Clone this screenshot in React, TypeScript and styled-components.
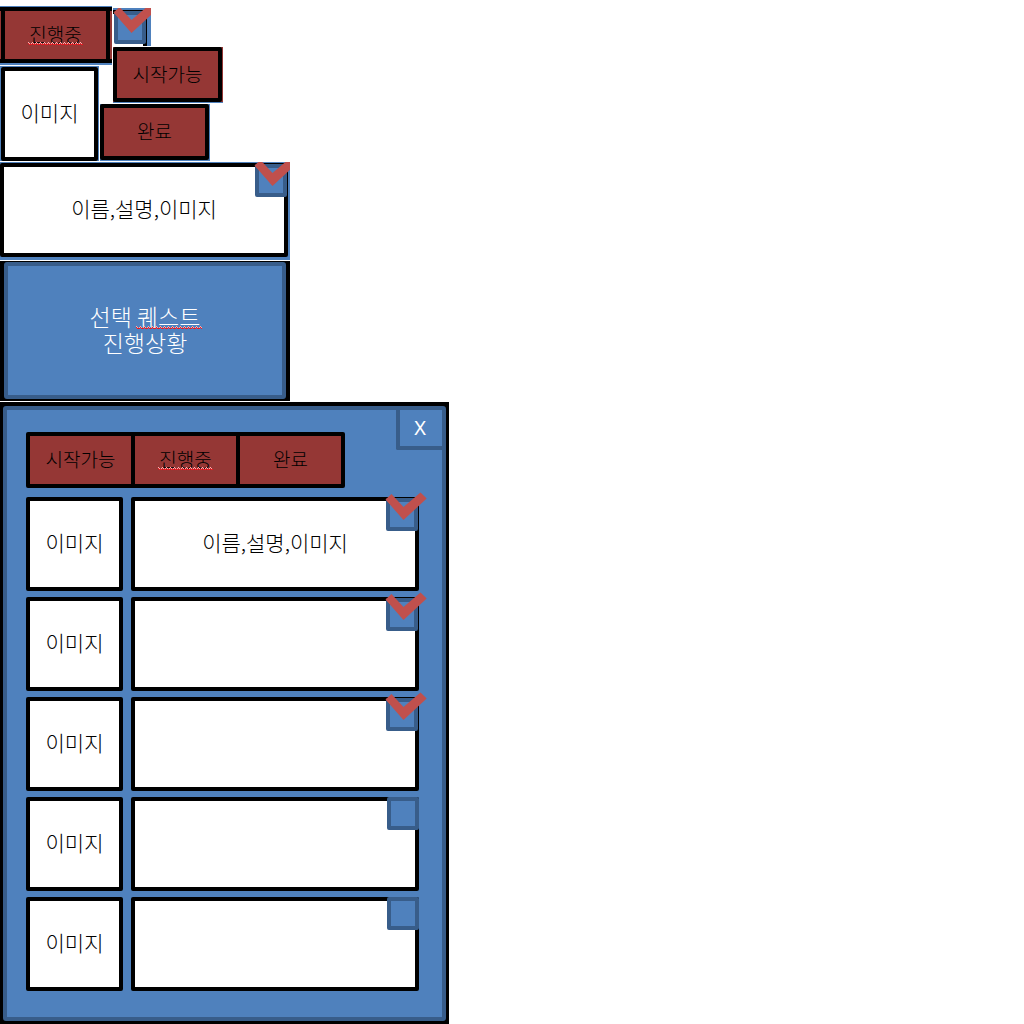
import React, { useState } from "react";
import styled, { createGlobalStyle, css } from "styled-components";

const color = {
  blue: "#4f81bd",
  navy: "#385d8a",
  red: "#953735",
  mark: "#c0504d",
  black: "#000",
  white: "#fff",
};

const GlobalStyle = createGlobalStyle`
  *, *::before, *::after { box-sizing: border-box; }
  body {
    margin: 0;
    background: ${color.white};
    color: ${color.black};
    font-family: "Noto Sans CJK KR", "Noto Sans", sans-serif;
    font-weight: 300;
  }
  button { font: inherit; color: inherit; cursor: pointer; }
`;

const Page = styled.main`
  display: flex;
  flex-direction: column;
  align-items: flex-start;
  gap: 1px;
  padding-top: 6px;
`;

/* ---------- shared parts ---------- */

const center = css`
  display: flex;
  align-items: center;
  justify-content: center;
`;

const buttonText = css`
  font-size: 19px;
  line-height: 22px;
`;

const bodyText = css`
  padding-bottom: 4px;
  font-size: 21px;
  line-height: 26px;
`;

const Misspelled = styled.span`
  position: relative;
  display: inline-block;
`;

const WaveSvg = styled.svg`
  position: absolute;
  left: -1px;
  bottom: 0;
  width: calc(100% + 3px);
  height: 3px;
`;

function Spelling({ id, children }: { id: string; children: string }) {
  return (
    <Misspelled>
      {children}
      <WaveSvg aria-hidden="true" shapeRendering="crispEdges">
        <defs>
          <pattern id={id} width="4" height="3" patternUnits="userSpaceOnUse">
            <path d="M0 0h1v2h-1zM1 1h1v2h-1zM2 2h1v1h-1zM3 1h1v2h-1z" fill="#f01820" />
            <path d="M0 0h1v1h-1zM1 1h1v1h-1zM3 1h1v1h-1z" fill="#f3b4b4" />
          </pattern>
        </defs>
        <rect width="100%" height="3" fill={`url(#${id})`} />
      </WaveSvg>
    </Misspelled>
  );
}

const CheckHolder = styled.label<{ $flush?: boolean }>`
  position: absolute;
  top: ${(p) => (p.$flush ? "-4px" : "-3px")};
  right: ${(p) => (p.$flush ? "-4px" : "-3px")};
  width: 32px;
  height: 33px;
`;

const CheckInput = styled.input`
  appearance: none;
  display: block;
  width: 100%;
  height: 100%;
  margin: 0;
  border: 4px solid ${color.navy};
  border-radius: 2px;
  background: ${color.blue};
`;

const CheckMark = styled.svg`
  position: absolute;
  top: -6px;
  left: -1px;
  width: 42px;
  height: 28px;
  pointer-events: none;
`;

function Check({ initial, label }: { initial: boolean; label: string }) {
  const [checked, setChecked] = useState(initial);
  return (
    <CheckHolder $flush={!initial}>
      <CheckInput
        type="checkbox"
        aria-label={label}
        checked={checked}
        onChange={(e) => setChecked(e.target.checked)}
      />
      {checked && (
        <CheckMark viewBox="0 0 42 28" aria-hidden="true">
          <path d="M0.5 7.5 6.5 2 18.5 15 35.5 0.5 41.7 6.5 18.5 28z" fill={color.mark} />
        </CheckMark>
      )}
    </CheckHolder>
  );
}

const Thumb = styled.div`
  ${center}
  ${bodyText}
  width: 97px;
  height: 94px;
  flex: none;
  border: 4px solid ${color.black};
  border-radius: 2px;
  background: ${color.white};
`;

const InfoBox = styled.div`
  ${center}
  ${bodyText}
  position: relative;
  flex: 1;
  height: 94px;
  border: 4px solid ${color.black};
  border-radius: 2px;
  background: ${color.white};
`;

/* ---------- loose pieces ---------- */

const Pieces = styled.section`
  display: grid;
  grid-template-columns: 100px 13px 110px;
  grid-template-rows: 41px 19px 38px 57px;
`;

const ActivePiece = styled.button`
  grid-area: 1 / 1 / 3 / 3;
  display: flex;
  margin: 0 1px 1px 0;
  padding: 1px 0 2px;
  border: 0;
  background: ${color.blue};
`;

const ActiveEdge = styled.span`
  display: flex;
  flex: 1;
  align-self: stretch;
  padding: 0 2px 0 1px;
  border: solid ${color.black};
  border-width: 4px 0;
  background: ${color.red};
`;

const ActiveFace = styled.span`
  ${center}
  ${buttonText}
  flex: 1;
  padding-bottom: 2px;
  border: solid ${color.black};
  border-width: 0 4px;
`;

const CheckPiece = styled.div`
  grid-area: 1 / 3 / 2 / 4;
  align-self: end;
  width: 38px;
  height: 38px;
  margin-bottom: 1px;
  padding: 2px 4px 0 0;
  overflow: hidden;
  background: ${color.blue};
`;

const CheckCorner = styled.div`
  position: relative;
  height: 36px;
  border: solid ${color.black};
  border-width: 4px 4px 0 0;
  background: ${color.white};
`;

const StartPiece = styled.button`
  grid-area: 2 / 3 / 4 / 4;
  display: flex;
  margin: 0 0 1px;
  padding: 0 1px 1px 0;
  border: 0;
  background: linear-gradient(${color.red}, ${color.red}) top / 100% 55px no-repeat ${color.blue};
`;

const DonePiece = styled.button`
  grid-area: 4 / 2 / 5 / 4;
  display: flex;
  width: 110px;
  padding: 0 1px 1px 0;
  border: 0;
  background: ${color.blue};
`;

const PieceFace = styled.span`
  ${center}
  ${buttonText}
  flex: 1;
  align-self: stretch;
  padding-bottom: 2px;
  border: 4px solid ${color.black};
  border-radius: 2px;
  background: ${color.red};
`;

const ThumbPiece = styled.div`
  grid-area: 3 / 1 / 5 / 2;
  width: 99px;
  padding: 1px;
  overflow: hidden;
  background: ${color.blue};
`;

const CardPiece = styled.section`
  display: flex;
  width: 100%;
  max-width: 290px;
  padding: 1px 2px 3px 0;
  overflow: hidden;
  background: ${color.blue};
`;

const StatusOuter = styled.section`
  width: 100%;
  max-width: 290px;
  padding: 1px 4px 2px;
  background: ${color.black};
`;

const StatusFace = styled.p`
  ${center}
  flex-direction: column;
  height: 137px;
  margin: 0;
  padding-bottom: 4px;
  border: 4px solid ${color.navy};
  border-radius: 3px;
  background: ${color.blue};
  color: ${color.white};
  font-size: 23px;
  line-height: 26px;
`;

/* ---------- quest window ---------- */

const WindowOuter = styled.section`
  width: 100%;
  max-width: 449px;
  padding: 4px 3px 3px;
  background: ${color.black};
`;

const WindowFace = styled.div`
  padding-bottom: 26px;
  border: 4px solid ${color.navy};
  border-radius: 3px;
  background: ${color.blue};
`;

const WindowHead = styled.header`
  display: flex;
  align-items: flex-start;
  justify-content: space-between;
`;

const Tabs = styled.nav`
  display: flex;
  gap: 4px;
  margin: 22px 0 0 19px;
  padding: 4px;
  border-radius: 2px;
  background: ${color.black};
`;

const Tab = styled.button`
  && {
    ${buttonText}
  }
  width: 101px;
  height: 48px;
  padding: 0 0 2px;
  border: 0;
  background: ${color.red};
`;

const CloseButton = styled.button`
  width: 46px;
  height: 40px;
  padding: 0 2px 0 0;
  border: solid ${color.navy};
  border-width: 0 0 4px 4px;
  border-radius: 0 0 0 2px;
  background: ${color.blue};
  color: ${color.white};
  font-family: "Noto Sans", sans-serif;
  font-size: 20px;
  font-weight: 400;
  line-height: 24px;
`;

const QuestList = styled.ul`
  display: flex;
  flex-direction: column;
  gap: 6px;
  margin: 9px 23px 0 19px;
  padding: 0;
  list-style: none;
`;

const QuestRow = styled.li`
  display: flex;
  gap: 8px;
`;

const quests = [
  { info: "이름,설명,이미지", done: true },
  { info: "", done: true },
  { info: "", done: true },
  { info: "", done: false },
  { info: "", done: false },
];

export default function App() {
  return (
    <>
      <GlobalStyle />
      <Page>
        <Pieces>
          <ActivePiece type="button">
            <ActiveEdge>
              <ActiveFace>
                <Spelling id="wave-piece">진행중</Spelling>
              </ActiveFace>
            </ActiveEdge>
          </ActivePiece>
          <CheckPiece>
            <CheckCorner>
              <Check initial label="완료" />
            </CheckCorner>
          </CheckPiece>
          <StartPiece type="button">
            <PieceFace>시작가능</PieceFace>
          </StartPiece>
          <ThumbPiece>
            <Thumb>이미지</Thumb>
          </ThumbPiece>
          <DonePiece type="button">
            <PieceFace>완료</PieceFace>
          </DonePiece>
        </Pieces>

        <CardPiece>
          <InfoBox>
            이름,설명,이미지
            <Check initial label="완료" />
          </InfoBox>
        </CardPiece>

        <StatusOuter>
          <StatusFace>
            <span>
              선택 <Spelling id="wave-status">퀘스트</Spelling>
            </span>
            <span>진행상황</span>
          </StatusFace>
        </StatusOuter>

        <WindowOuter>
          <WindowFace>
            <WindowHead>
              <Tabs>
                <Tab type="button">시작가능</Tab>
                <Tab type="button">
                  <Spelling id="wave-tab">진행중</Spelling>
                </Tab>
                <Tab type="button">완료</Tab>
              </Tabs>
              <CloseButton type="button">X</CloseButton>
            </WindowHead>
            <QuestList>
              {quests.map((quest, i) => (
                <QuestRow key={i}>
                  <Thumb>이미지</Thumb>
                  <InfoBox>
                    {quest.info}
                    <Check initial={quest.done} label="완료" />
                  </InfoBox>
                </QuestRow>
              ))}
            </QuestList>
          </WindowFace>
        </WindowOuter>
      </Page>
    </>
  );
}
